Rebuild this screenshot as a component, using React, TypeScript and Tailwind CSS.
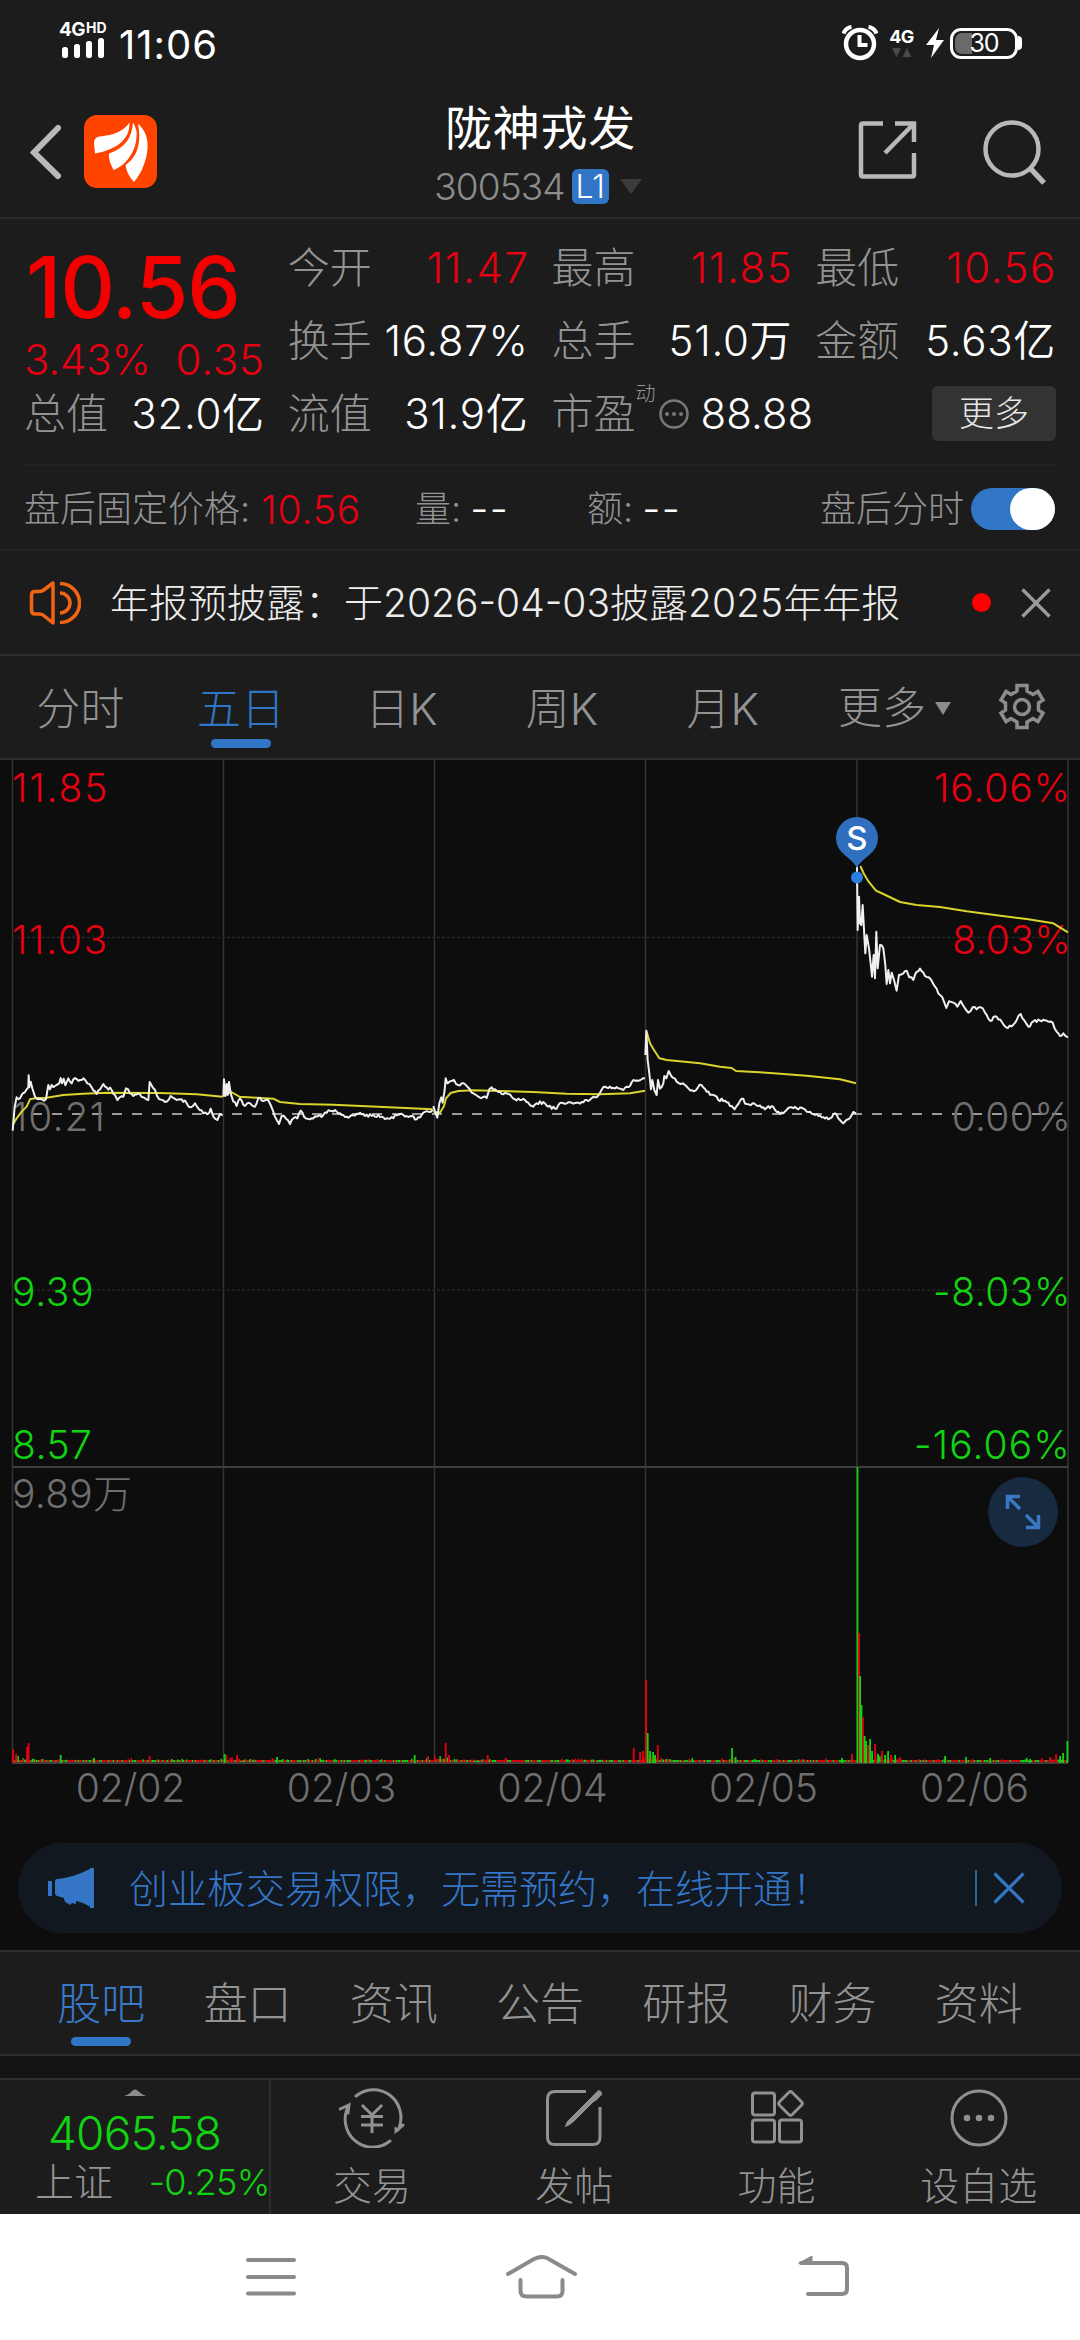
import { useState } from 'react';
import type { ReactNode } from 'react';

type Point = [number, number];

const RED = '#e60012';
const GREEN = '#12d312';

// deterministic noise so that the chart is stable between renders
const noise = (n: number) => {
    const s = Math.sin(n * 127.1) * 43758.5453;
    return (s - Math.floor(s)) * 2 - 1;
};

const toPath = (points: Point[], jitter = 0) => {
    const out: string[] = [];
    points.forEach(([x, y], i) => {
        out.push(`${x.toFixed(1)},${y.toFixed(1)}`);
        const next = points[i + 1];
        if (!next || !jitter) return;
        const steps = Math.floor((next[0] - x) / 5);
        for (let s = 1; s < steps; s++) {
            const t = s / steps;
            const px = x + (next[0] - x) * t;
            const py = y + (next[1] - y) * t + noise(px) * jitter;
            out.push(`${px.toFixed(1)},${py.toFixed(1)}`);
        }
    });
    return out.join(' ');
};

// series are kept on a 3x grid, y = 0 is 240px below the chart top
const PRICE: Point[][] = [
    [[38, 392], [44, 320], [50, 292], [60, 295], [68, 280], [80, 268], [85, 262], [86, 226], [88, 262], [92, 245], [97, 265], [105, 290], [115, 298], [138, 297], [145, 255], [150, 268], [155, 255], [165, 258], [178, 250], [182, 234], [186, 250], [191, 236], [196, 256], [205, 235], [215, 250], [220, 238], [240, 240], [250, 235], [262, 250], [275, 262], [290, 282], [300, 268], [310, 252], [320, 262], [335, 270], [345, 285], [352, 300], [370, 290], [378, 265], [390, 280], [400, 288], [415, 280], [430, 292], [445, 300], [449, 246], [458, 262], [465, 270], [478, 298], [495, 306], [512, 288], [530, 300], [545, 298], [560, 310], [572, 322], [585, 310], [595, 325], [610, 340], [628, 338], [632, 326], [640, 350], [652, 360], [660, 342], [668, 346]],
    [[670, 290], [672, 238], [676, 288], [680, 252], [683, 285], [687, 246], [692, 280], [700, 305], [710, 318], [720, 295], [735, 318], [750, 310], [765, 320], [775, 294], [790, 303], [803, 298], [812, 315], [825, 350], [837, 372], [845, 348], [858, 356], [870, 372], [880, 355], [892, 355], [902, 332], [912, 350], [930, 358], [950, 350], [970, 345], [990, 332], [1010, 335], [1025, 345], [1040, 350], [1055, 345], [1080, 338], [1095, 348], [1120, 345], [1145, 350], [1170, 356], [1200, 342], [1215, 350], [1235, 348], [1250, 358], [1265, 345], [1285, 335], [1298, 330]],
    [[1300, 318], [1305, 335], [1312, 353], [1318, 310], [1324, 292], [1328, 308], [1334, 270], [1337, 235], [1342, 250], [1350, 244], [1362, 240], [1375, 255], [1385, 250], [1402, 260], [1415, 278], [1428, 285], [1440, 293], [1460, 294], [1468, 268], [1475, 262], [1490, 272], [1505, 282], [1520, 280], [1540, 296], [1560, 300], [1575, 300], [1595, 318], [1610, 310], [1630, 306], [1645, 320], [1665, 326], [1685, 308], [1710, 307], [1735, 308], [1760, 300], [1785, 292], [1800, 278], [1815, 260], [1835, 265], [1855, 265], [1870, 270], [1890, 258], [1900, 240], [1915, 242], [1935, 236]],
    [[1936, 165], [1939, 92], [1943, 180], [1948, 220], [1953, 268], [1957, 240], [1963, 270], [1970, 285], [1974, 240], [1980, 266], [1990, 250], [1993, 228], [1999, 235], [2006, 213], [2015, 230], [2030, 245], [2042, 252], [2055, 255], [2065, 265], [2082, 274], [2094, 262], [2104, 255], [2120, 275], [2140, 285], [2155, 300], [2175, 302], [2195, 318], [2204, 328], [2215, 312], [2225, 296], [2240, 312], [2258, 310], [2275, 318], [2295, 328], [2315, 318], [2335, 335], [2350, 340], [2370, 322], [2390, 325], [2410, 326], [2430, 335], [2450, 342], [2465, 352], [2485, 358], [2505, 340], [2520, 360], [2530, 370], [2545, 358], [2560, 336], [2568, 340]],
    [[2571, -400], [2573, -210], [2577, -310], [2580, -230], [2584, -225], [2588, -285], [2591, -230], [2596, -140], [2600, -195], [2607, -155], [2613, -100], [2616, -70], [2621, -135], [2625, -65], [2629, -205], [2633, -95], [2640, -165], [2650, -155], [2656, -105], [2660, -48], [2665, -90], [2670, -50], [2675, -82], [2682, -60], [2690, -28], [2697, -75], [2710, -80], [2720, -88], [2728, -68], [2740, -60], [2750, -85], [2760, -94], [2775, -72], [2790, -65], [2805, -40], [2820, -15], [2832, 5], [2839, 24], [2847, 4], [2860, 8], [2872, 20], [2882, 3], [2895, 25], [2905, 38], [2918, 22], [2930, 28], [2942, 22], [2955, 38], [2970, 62], [2990, 50], [3005, 65], [3018, 82], [3040, 74], [3055, 48], [3062, 42], [3072, 60], [3085, 80], [3100, 64], [3120, 62], [3140, 62], [3158, 68], [3170, 95], [3180, 108], [3190, 100], [3204, 112]],
];

const AVERAGE: Point[][] = [
    [[38, 375], [50, 355], [65, 335], [80, 320], [90, 298], [110, 294], [140, 293], [190, 285], [250, 281], [320, 278], [480, 279], [590, 283], [668, 290]],
    [[672, 285], [694, 276], [718, 290], [780, 294], [820, 296], [840, 306], [900, 312], [1000, 314], [1100, 319], [1200, 323], [1298, 328]],
    [[1300, 335], [1320, 338], [1332, 318], [1338, 295], [1352, 279], [1375, 273], [1420, 271], [1500, 273], [1600, 276], [1700, 281], [1800, 283], [1890, 280], [1935, 272]],
    [[1940, 95], [1950, 130], [1962, 150], [1978, 175], [2000, 180], [2100, 190], [2160, 200], [2195, 204], [2208, 213], [2300, 218], [2420, 227], [2520, 238], [2568, 250]],
    [[2581, -402], [2592, -378], [2606, -355], [2628, -328], [2650, -318], [2700, -294], [2750, -285], [2820, -279], [2900, -266], [2990, -254], [3080, -243], [3160, -230], [3204, -203]],
];

// [x, height, rising]
const SPIKES: [number, number, boolean][] = [
    [13, 14, true], [16, 9, true], [27, 16, true], [28.5, 20, true], [60.6, 8, false], [94, 5, false], [149.5, 7, true], [224.5, 9, false], [237, 8, true], [277, 6, false], [414.6, 8, false], [428, 7, true],
    [445.6, 20, true], [449, 8, true], [487.6, 8, true], [506, 5, true], [633.6, 15, true], [640, 11, true], [643, 12, true], [646, 83, true], [647.6, 30, false], [650, 12, false], [653, 11, false], [655, 8, false],
    [657.7, 18, true], [732, 15, false], [735.5, 6, false], [842, 5, false], [852, 9, true], [857.4, 296, false], [859, 130, true], [860, 87, false], [861.4, 58, false], [862.8, 46, true], [864.5, 27, false], [866, 22, false],
    [868, 18, true], [870, 24, false], [872, 12, false], [875, 19, true], [878, 9, false], [882, 12, true], [885, 8, false], [888, 12, false], [891, 8, true], [895, 8, false], [900, 6, true], [945, 7, false],
    [966, 6, false], [990, 5, false], [1030, 4, false], [1050, 6, true], [1056, 9, true], [1060, 7, false], [1063, 10, false], [1067.3, 22, false],
];

const GRID_X = [12.5, 223.5, 434.5, 645.5, 857, 1068];

const QUOTES: { label: string; value: string; red?: boolean }[][] = [
    [{ label: '今开', value: '11.47', red: true }, { label: '最高', value: '11.85', red: true }, { label: '最低', value: '10.56', red: true }],
    [{ label: '换手', value: '16.87%' }, { label: '总手', value: '51.0万' }, { label: '金额', value: '5.63亿' }],
];

function StatusBar() {
    return (
        <div className="flex h-[82px] items-end justify-between pl-[59px] pr-[58px]">
            <div className="flex items-end">
                <div className="flex w-[48px] flex-col pb-[24px]">
                    <div className="flex items-start text-[19px] leading-[15px] font-bold">
                        <span className="tracking-[-0.5px]">4G</span>
                        <span className="pl-px text-[14px] leading-[11px]">HD</span>
                    </div>
                    <svg width="46" height="20" viewBox="0 0 46 20" fill="#fff" className="mt-px">
                        <rect x="3" y="9" width="6" height="11" rx="2.5" />
                        <rect x="15" y="6" width="6" height="14" rx="2.5" />
                        <rect x="27" y="3" width="6" height="17" rx="2.5" />
                        <rect x="39" y="0" width="6" height="20" rx="2.5" />
                    </svg>
                </div>
                <div className="pb-[17px] pl-[12px] text-[40px] leading-none tracking-[1px]">11:06</div>
            </div>
            <div className="flex items-center pb-[20px]">
                <svg width="36" height="38" viewBox="0 0 36 38" fill="none" stroke="#fff">
                    <circle cx="18" cy="20" r="14" strokeWidth="4.5" />
                    <path d="M17.5 11v10h8" strokeWidth="4" />
                    <path d="M1.5 9.500a10 10 0 0 1 8-6.500M26.500 3a10 10 0 0 1 8 6.500" strokeWidth="4" />
                </svg>
                <div className="ml-[11px] flex w-[25px] flex-col items-center">
                    <span className="text-[18px] leading-[17px] font-bold tracking-[-0.5px]">4G</span>
                    <svg width="20" height="10" viewBox="0 0 20 10" fill="#4a4a4a" className="mt-[3px]">
                        <path d="M0 0h9L4.500 9zM10.500 9h9L15 0z" />
                    </svg>
                </div>
                <svg width="18" height="30" viewBox="0 0 18 30" fill="#fff" className="ml-[12px]">
                    <path d="M13 0L0 17h8L5 30L18 12h-8z" />
                </svg>
                <div className="relative ml-[6px] flex h-[31px] w-[68px] items-center justify-center rounded-[11px] border-[3px] border-white">
                    <span className="absolute left-[2px] top-[2px] h-[21px] w-[17px] rounded-l-[7px] bg-[#6a6a6a]" />
                    <span className="relative text-[25px] leading-none tracking-[-1px]">30</span>
                </div>
                <span className="h-[14px] w-[4px] rounded-r-full bg-white" />
            </div>
        </div>
    );
}

function Header() {
    return (
        <div className="flex h-[137px] items-start justify-between border-b-2 border-[#2a2a2a] pl-[30px] pr-[33px]">
            <div className="flex w-[367px] items-center pt-[33px]">
                <svg width="33" height="56" viewBox="0 0 33 56" fill="none" stroke="#b9b9b9" strokeWidth="6" strokeLinecap="round">
                    <path d="M28 4L4 28.500L28 52" />
                </svg>
                <svg width="73" height="73" viewBox="0 0 73 73" className="ml-[21px]">
                    <rect width="73" height="73" rx="13" fill="#ff4400" />
                    <g fill="#fff">
                        <path d="M45.500 7.500C40 16 30 20 16 21.500Q10 22 10 28L11 38.500C30 35 46 26 45.500 7.500Z" />
                        <path d="M49 7.500C48 23 41 33 25 38.500Q24 45 29.600 55C45 49 54 32 52.500 16Q51.500 11 49 7.500Z" />
                        <path d="M54 8.500C62 16 65 25 63 38C61 50 56 60 50 67Q43 60 41.500 50C52 43 58 30 54 8.500Z" />
                    </g>
                </svg>
            </div>
            <div className="flex flex-col items-center pt-[22px]">
                <div className="pl-[3px] text-[47px] leading-none tracking-[0.7px]">陇神戎发</div>
                <div className="mt-[17px] flex items-center pr-[2px]">
                    <span className="text-[37px] leading-[37px] font-light tracking-[-0.9px] text-[#8c8c8c]">300534</span>
                    <span className="ml-[7px] flex h-[35px] w-[37px] items-center justify-center rounded-[6px] bg-[#3075c6] text-[32px] leading-none font-light">L1</span>
                    <svg width="22" height="15" viewBox="0 0 22 15" fill="#3c3c3c" className="ml-[11px]">
                        <path d="M0 0h22L11 15z" />
                    </svg>
                </div>
            </div>
            <div className="flex w-[366px] items-start justify-end pt-[37px]">
                <svg width="60" height="60" viewBox="0 0 60 60" fill="none" stroke="#b9b9b9" strokeWidth="4.500">
                    <path d="M25 4.500H5Q3 4.500 3 6.500V55.500Q3 57.500 5 57.500H54Q56 57.500 56 55.500V34" />
                    <path d="M37 4.500H56V23M55 5.500L27 34" />
                </svg>
                <svg width="65" height="66" viewBox="0 0 65 66" fill="none" stroke="#b9b9b9" strokeWidth="4.500" className="ml-[64px]">
                    <circle cx="30" cy="30" r="26.500" />
                    <path d="M48.500 49.500L62 64" strokeWidth="5.500" />
                </svg>
            </div>
        </div>
    );
}

function Quote({ label, value, red }: { label: string; value: string; red?: boolean }) {
    return (
        <div className="flex h-[73px] items-center justify-between text-[42px] leading-none whitespace-nowrap">
            <span className="font-light text-[#939393]">{label}</span>
            <span className={red ? '-mr-px font-light tracking-[1.6px] text-[#e60012]' : 'font-[350] tracking-[0.7px]'}>{value}</span>
        </div>
    );
}

function QuotePanel() {
    return (
        <div className="px-[24px] pt-[12px]">
            <div className="grid h-[235px] grid-cols-4 grid-rows-[73px_73px_73px] gap-x-[23px] border-b-2 border-[#222]">
                <div className="row-span-2 flex flex-col text-[#e60012]">
                    <div className="flex h-[113px] items-center pl-[2px] text-[85px] leading-none font-medium tracking-[-1px] text-[#f30000]">10.56</div>
                    <div className="flex h-[31px] items-center justify-between text-[42px] leading-none font-light">
                        <span className="tracking-[-0.2px]">3.43%</span>
                        <span className="tracking-[0.8px]">0.35</span>
                    </div>
                </div>
                {QUOTES[0].map((q) => (
                    <Quote key={q.label} {...q} />
                ))}
                {QUOTES[1].map((q) => (
                    <Quote key={q.label} {...q} />
                ))}
                <Quote label="总值" value="32.0亿" />
                <Quote label="流值" value="31.9亿" />
                <div className="flex h-[73px] items-center text-[42px] leading-none whitespace-nowrap">
                    <span className="font-light text-[#939393]">市盈</span>
                    <span className="-mt-[40px] text-[20px] font-light text-[#939393]">动</span>
                    <svg width="30" height="30" viewBox="0 0 30 30" fill="none" stroke="#777" strokeWidth="2.500" className="ml-[3px] shrink-0">
                        <circle cx="15" cy="15" r="13.500" />
                        <path d="M8 15h.01M15 15h.01M22 15h.01" strokeWidth="4" strokeLinecap="round" />
                    </svg>
                    <span className="pl-[12px] font-[350]">88.88</span>
                </div>
                <div className="flex h-[73px] items-center justify-end">
                    <button className="h-[55px] w-[124px] rounded-[6px] bg-[#333] text-[35px] leading-none font-light text-[#e6e6e6]">更多</button>
                </div>
            </div>
        </div>
    );
}

function AfterHours() {
    const [on, setOn] = useState(true);
    return (
        <div className="flex h-[85px] items-center border-b-2 border-[#232323] pt-[3px] pl-[24px] pr-[25px] text-[36px] leading-none font-light text-[#939393]">
            <div className="flex w-[391px] items-center">
                盘后固定价格:
                <span className="pl-[11px] text-[39px] tracking-[0.9px] text-[#e60012]">10.56</span>
            </div>
            <div className="flex w-[172px] items-center">
                量:<span className="pl-[9px] text-[40px] leading-[36px] tracking-[1.5px] text-white">--</span>
            </div>
            <div className="flex items-center">
                额:<span className="pl-[9px] text-[40px] leading-[36px] tracking-[1.5px] text-white">--</span>
            </div>
            <div className="ml-auto flex items-center">
                盘后分时
                <button onClick={() => setOn(!on)} className={`ml-[7px] flex h-[42px] w-[84px] rounded-full bg-[#3075c6] ${on ? 'justify-end' : 'justify-start'}`}>
                    <span className="h-[42px] w-[45px] rounded-full bg-white" />
                </button>
            </div>
        </div>
    );
}

function Notice() {
    return (
        <div className="flex h-[105px] items-center border-b-2 border-[#303030] pl-[29px] pr-[29px]">
            <svg width="52" height="44" viewBox="0 0 52 44" fill="none" stroke="#f06413" strokeWidth="3.500">
                <path d="M24 2V42L14 34Q12 33 10 33H6Q2.500 33 2.500 29V14Q2.500 10.500 6 10.500H10Q12 10.500 14 9.500Z" strokeLinejoin="round" />
                <path d="M31 12A10 10 0 0 1 31 32M31 2.500A19.500 19.500 0 0 1 31 41.500" />
            </svg>
            <span className="pl-[29px] text-[39px] leading-none font-light whitespace-nowrap text-[#ededed]">年报预披露：于2026-04-03披露2025年年报</span>
            <span className="ml-auto size-[19px] rounded-full bg-[#ff0000]" />
            <svg width="30" height="30" viewBox="0 0 30 30" stroke="#9a9a9a" strokeWidth="3.500" className="ml-[30px]">
                <path d="M1.500 1.500L28.500 28.500M28.500 1.500L1.500 28.500" />
            </svg>
        </div>
    );
}

function ChartTabs() {
    const [active, setActive] = useState('五日');
    return (
        <div className="flex h-[104px] border-b-2 border-[#303030] bg-[#1c1c1c] text-[44px] leading-none font-light text-[#939393]">
            {['分时', '五日', '日K', '周K', '月K'].map((tab) => (
                <button
                    key={tab}
                    onClick={() => setActive(tab)}
                    className={`flex w-[160.600px] flex-col items-center pt-[31px] ${tab === active ? 'text-[#3075c6]' : ''}`}
                >
                    {tab}
                    {tab === active && <span className="mt-[8px] h-[9px] w-[60px] rounded-full bg-[#3075c6]" />}
                </button>
            ))}
            <button className="flex items-center pt-[2px] pl-[35px]">
                更多
                <svg width="16" height="13" viewBox="0 0 16 13" fill="#8c8c8c" className="ml-[9px]">
                    <path d="M0 0h16L8 13z" />
                </svg>
            </button>
            <button className="ml-auto pr-[34px]">
                <svg width="48" height="48" viewBox="0 0 48 48" fill="none" stroke="#8c8c8c" strokeWidth="3.500">
                    <circle cx="24" cy="24" r="7.500" />
                    <path d="M19 2.500h10v5.500l6 3.500 5-3 5 8.500-4.500 3v7l4.500 3-5 8.500-5-3-6 3.500v5.500h-10v-5.500l-6-3.500-5 3-5-8.500 4.500-3v-7l-4.500-3 5-8.500 5 3 6-3.500z" />
                </svg>
            </button>
        </div>
    );
}

function Chart() {
    const bars: ReactNode[] = [];
    for (let x = 12; x < 1068; x += 1.5) {
        const h = 2 + Math.max(0, noise(x) * 2.6) * Math.max(0, noise(x + 7));
        bars.push(<rect key={x} x={x} y={1002 - h} width="1.500" height={h} fill={noise(x * 3) > -0.15 ? RED : GREEN} />);
    }
    // heavier trading around each open
    [12, 224, 434, 646, 857].forEach((open, day) => {
        for (let i = 0; i < 26; i++) {
            const h = (day === 4 ? 20 : 9) * Math.exp(-i / 13) * Math.abs(noise(open + i));
            bars.push(<rect key={`${open}-${i}`} x={open + i * 1.8} y={1002 - h} width="1.500" height={h} fill={noise(i + open * 2) > 0 ? RED : GREEN} />);
        }
    });
    return (
        <div className="relative h-[1006px]">
            <svg width="1080" height="1006" viewBox="0 0 1080 1006" fill="none" className="block">
                {GRID_X.map((x) => (
                    <path key={x} d={`M${x} 0V1002`} stroke="#343434" strokeWidth="1.500" />
                ))}
                <path d="M12 177.500H1068M12 530H1068" stroke="#262626" strokeWidth="1.500" strokeDasharray="3 2" />
                <path d="M12 707H1068M12 1003H1068" stroke="#3e3e3e" strokeWidth="2" />
                <path d="M32 354H1068" stroke="#9b9b9b" strokeWidth="2" strokeDasharray="10 10" />
                {bars}
                {SPIKES.map(([x, h, up]) => (
                    <rect key={x} x={x - 0.8} y={1003 - h} width="1.800" height={h} fill={up ? RED : GREEN} />
                ))}
            </svg>
            <div className="absolute inset-0 text-[39px] leading-none font-light text-[#6f6f6f]">
                <span className="absolute left-[12px] top-[8px] tracking-[1.900px] text-[#e60012]">11.85</span>
                <span className="absolute left-[12px] top-[160px] tracking-[1.700px] text-[#e60012]">11.03</span>
                <span className="absolute left-[12px] top-[337px] tracking-[1px]">10.21</span>
                <span className="absolute left-[12px] top-[512px] tracking-[0.700px] text-[#12d312]">9.39</span>
                <span className="absolute left-[12px] top-[665px] tracking-[0.500px] text-[#12d312]">8.57</span>
                <span className="absolute left-[12px] top-[714px] tracking-[0.300px]">9.89万</span>
                <span className="absolute right-[9px] top-[8px] tracking-[0.900px] text-[#e60012]">16.06%</span>
                <span className="absolute right-[9px] top-[160px] tracking-[0.300px] text-[#e60012]">8.03%</span>
                <span className="absolute right-[9px] top-[337px] tracking-[0.300px]">0.00%</span>
                <span className="absolute right-[9px] top-[512px] tracking-[0.500px] text-[#12d312]">-8.03%</span>
                <span className="absolute right-[9px] top-[665px] tracking-[1.100px] text-[#12d312]">-16.06%</span>
            </div>
            <svg width="1080" height="1006" viewBox="0 0 1080 1006" fill="none" className="absolute inset-0">
                <g transform="translate(0 240) scale(0.33333)" strokeWidth="6" strokeLinejoin="round">
                    {AVERAGE.map((day, i) => (
                        <polyline key={i} points={toPath(day)} stroke="#d9d52c" />
                    ))}
                    {PRICE.map((day, i) => (
                        <polyline key={i} points={toPath(day, 5)} stroke="#f0f0f0" />
                    ))}
                </g>
                <path d="M857 108C853 98 836 94 836 78A21 21 0 0 1 878 78C878 94 861 98 857 108Z" fill="#2f6fbe" />
                <circle cx="857" cy="117.500" r="6" fill="#2b7de0" />
            </svg>
            <span className="absolute left-[837px] top-[62px] w-[40px] text-center text-[33px] leading-none font-medium text-white">S</span>
            <button className="absolute right-[22px] top-[717px] flex size-[70px] items-center justify-center rounded-full bg-[#182a40]">
                <svg width="36" height="36" viewBox="0 0 36 36" fill="none" stroke="#3a78c4" strokeWidth="3.500">
                    <path d="M2.500 15V2.500H15M3 3L15 15M21 33.500H33.500V21M33 33L21 21" />
                </svg>
            </button>
        </div>
    );
}

function Banner() {
    return (
        <div className="mx-[18px] mt-[36px] flex h-[90px] items-center rounded-full bg-[#111820] pl-[30px] pr-[37px] text-[#3476c5]">
            <svg width="46" height="40" viewBox="0 0 46 40" fill="#3476c5">
                <path d="M0 13h4v15H0zM7 13Q7 11 9 11Q24 10 42 1V0h4v40h-4v-1.500Q35 34 28 33V36L24 35L22 37L19 35Q16 34 16 30L9 28Q7 27 7 25Z" />
            </svg>
            <span className="pl-[35px] text-[39px] leading-none font-light whitespace-nowrap">创业板交易权限，无需预约，在线开通！</span>
            <span className="ml-auto h-[36px] w-[2px] bg-[#2c62a3]" />
            <svg width="32" height="32" viewBox="0 0 32 32" stroke="#3476c5" strokeWidth="3.200" className="ml-[16px]">
                <path d="M1.500 1.500L30.500 30.500M30.500 1.500L1.500 30.500" />
            </svg>
        </div>
    );
}

function InfoTabs() {
    const [active, setActive] = useState('股吧');
    return (
        <div className="mt-[17px] flex h-[106px] border-y-2 border-[#2e2e2e] bg-[#1c1c1c] px-[28px] text-[44px] leading-none font-light text-[#939393]">
            {['股吧', '盘口', '资讯', '公告', '研报', '财务', '资料'].map((tab) => (
                <button
                    key={tab}
                    onClick={() => setActive(tab)}
                    className={`flex flex-1 flex-col items-center pt-[30px] ${tab === active ? 'text-[#3a78c8]' : ''}`}
                >
                    {tab}
                    {tab === active && <span className="mt-[11px] h-[9px] w-[60px] rounded-full bg-[#3075c6]" />}
                </button>
            ))}
        </div>
    );
}

function Action({ label, children }: { label: string; children: ReactNode }) {
    return (
        <button className="flex flex-1 flex-col items-center pt-[8px]">
            <svg width="66" height="60" viewBox="0 0 66 60" fill="none" stroke="#919191" strokeWidth="3">
                {children}
            </svg>
            <span className="mt-[18px] text-[39px] leading-none font-light text-[#939393]">{label}</span>
        </button>
    );
}

function BottomBar() {
    return (
        <div className="mt-[22px] flex h-[136px] border-t-2 border-[#2e2e2e] bg-[#1c1c1c]">
            <div className="relative w-[271px] border-r-2 border-[#2e2e2e]">
                <svg width="22" height="7" viewBox="0 0 22 7" fill="#8c8c8c" className="absolute left-[124px] top-[9px]">
                    <path d="M0 7Q6 5 8 2Q11-1 14 2Q17 5 22 7Z" />
                </svg>
                <div className="pt-[30px] text-center text-[46px] leading-[46px] font-light tracking-[-0.8px] text-[#12d312]">4065.58</div>
                <div className="mt-[6px] flex items-center justify-between pl-[35px] leading-none font-light">
                    <span className="text-[39px] text-[#939393]">上证</span>
                    <span className="-mr-px text-[36px] tracking-[-0.6px] text-[#12d312]">-0.25%</span>
                </div>
            </div>
            <Action label="交易">
                <path d="M17 8A27.500 28 0 0 1 60 40M59 42L57 41L57 43L64 37" strokeLinecap="round" />
                <path d="M51 53A27.500 28 0 0 1 10 17M1 21L10 17L9 25" strokeLinecap="round" />
                <path d="M23 17L33 27L43 17M33 27V45M22 28.500H44M22 37H44" />
            </Action>
            <Action label="发帖">
                <path d="M45 3.500H14Q6.500 3.500 6.500 11V49Q6.500 56.500 14 56.500H52Q59 56.500 59 49V19" />
                <path d="M50 10L30 30Q25 34 24.500 38.500Q29 37 33 33L53 13Z" fill="#919191" strokeWidth="1" />
                <path d="M53 10.500L58 5.500" strokeWidth="6" strokeLinecap="round" />
            </Action>
            <Action label="功能">
                <rect x="8.500" y="5" width="22" height="22" rx="2.500" />
                <rect x="8.500" y="32" width="22" height="22" rx="2.500" />
                <rect x="35.500" y="32" width="22" height="22" rx="2.500" />
                <rect x="37.500" y="6.500" width="18" height="18" rx="2.500" transform="rotate(45 46.500 15.500)" />
            </Action>
            <Action label="设自选">
                <circle cx="33" cy="30" r="27" />
                <path d="M21 30h.01M33 30h.01M45 30h.01" strokeWidth="6.500" strokeLinecap="round" />
            </Action>
        </div>
    );
}

function NavBar() {
    return (
        <div className="flex h-[126px] items-start bg-white pl-[246px] pt-[43px]">
            <svg width="50" height="40" viewBox="0 0 50 40" stroke="#8a8a8a" strokeWidth="4" strokeLinecap="round">
                <path d="M2 3H48M2 20H48M2 36.500H48" />
            </svg>
            <svg width="72" height="46" viewBox="0 -2 72 46" fill="none" stroke="#8a8a8a" strokeWidth="4" strokeLinecap="round" className="-mt-[2px] ml-[209px]">
                <path d="M3 17L29 2Q36-1.500 42 1L70 17M15.500 23V34Q15.500 39.500 22 39.500H52Q57.500 39.500 57.500 34V23" />
            </svg>
            <svg width="52" height="44" viewBox="0 -2 52 44" fill="none" stroke="#8a8a8a" strokeWidth="4" strokeLinecap="round" className="-mt-[2px] ml-[221px]">
                <path d="M3 6H44Q49 6 49 11V32Q49 37 44 37H10" />
                <path d="M1 6L14-1V7Z" fill="#8a8a8a" strokeWidth="1" />
            </svg>
        </div>
    );
}

export default function App() {
    return (
        <div className="h-[2340px] w-[1080px] overflow-hidden bg-[#141414] font-['Inter','Noto_Sans_CJK_SC',sans-serif] text-white">
            <div className="bg-[#1c1c1c]">
                <StatusBar />
                <Header />
                <QuotePanel />
                <AfterHours />
                <Notice />
                <ChartTabs />
            </div>
            <div className="bg-[#0d0d0d]">
                <Chart />
                <div className="ml-[25px] flex w-[1055px] pt-[2px] text-[39px] leading-none font-light text-[#6f6f6f]">
                    {['02/02', '02/03', '02/04', '02/05', '02/06'].map((d) => (
                        <span key={d} className="w-[211px] text-center">{d}</span>
                    ))}
                </div>
                <Banner />
                <InfoTabs />
            </div>
            <BottomBar />
            <NavBar />
        </div>
    );
}
